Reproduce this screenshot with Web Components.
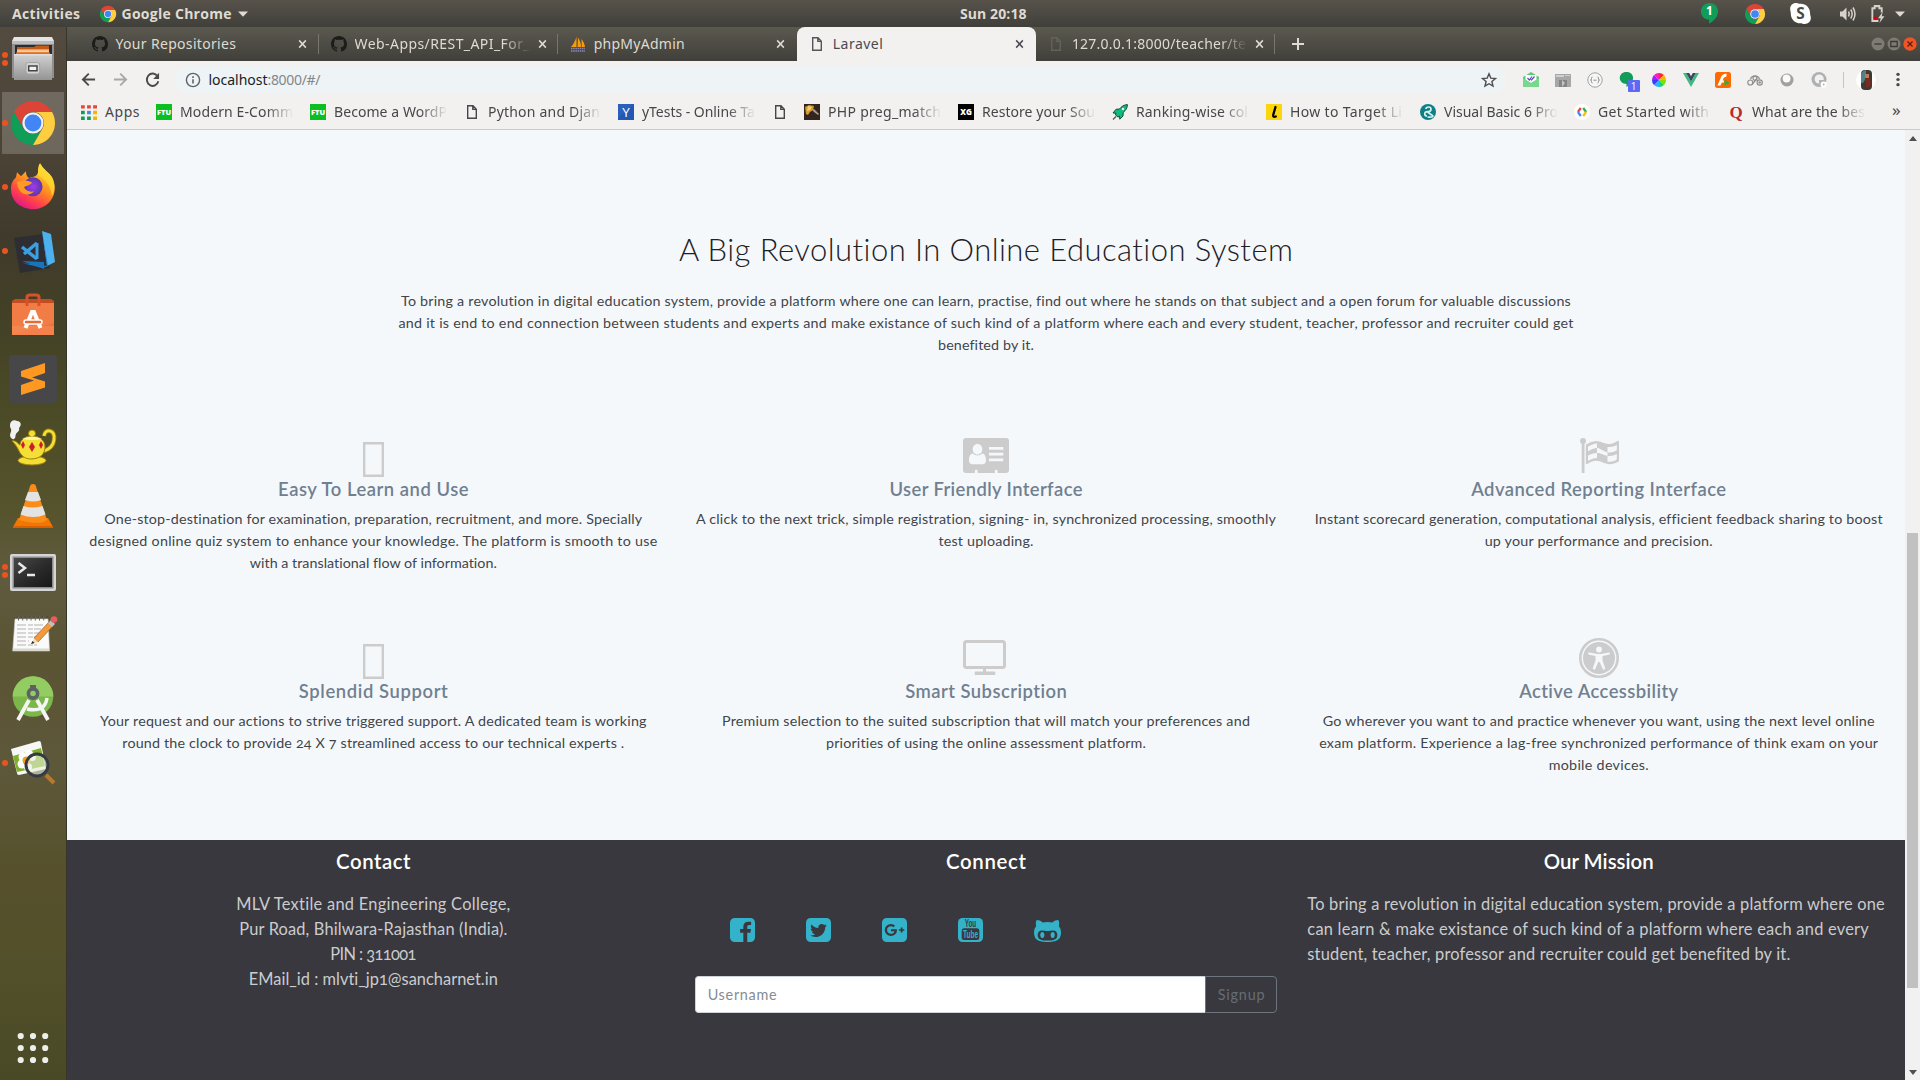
<!DOCTYPE html>
<html lang="en">
<head>
<meta charset="utf-8">
<title>Laravel</title>
<style>
html,body{margin:0;height:100%;overflow:hidden;background:#f5f8fb}
body{font-family:"Noto Sans","Open Sans",sans-serif}
</style>
</head>
<body>
<desktop-shell>
  <top-panel slot="panel"></top-panel>
  <app-dock slot="dock"></app-dock>
  <browser-window slot="window">
    <landing-page>
      <feature-card icon="tofu" heading="Easy To Learn and Use" w="190.5">
        <fit-text w="538">One-stop-destination for examination, preparation, recruitment, and more. Specially</fit-text>
        <fit-text w="568">designed online quiz system to enhance your knowledge. The platform is smooth to use</fit-text>
        <fit-text w="247">with a translational flow of information.</fit-text>
      </feature-card>
      <feature-card icon="card" heading="User Friendly Interface" w="193">
        <fit-text w="580">A click to the next trick, simple registration, signing- in, synchronized processing, smoothly</fit-text>
        <fit-text w="95">test uploading.</fit-text>
      </feature-card>
      <feature-card icon="flag" heading="Advanced Reporting Interface" w="255">
        <fit-text w="568">Instant scorecard generation, computational analysis, efficient feedback sharing to boost</fit-text>
        <fit-text w="228">up your performance and precision.</fit-text>
      </feature-card>
      <feature-card icon="tofu" heading="Splendid Support" w="149">
        <fit-text w="546.5">Your request and our actions to strive triggered support. A dedicated team is working</fit-text>
        <fit-text w="502">round the clock to provide 24 X 7 streamlined access to our technical experts .</fit-text>
      </feature-card>
      <feature-card icon="tv" heading="Smart Subscription" w="161.5">
        <fit-text w="528">Premium selection to the suited subscription that will match your preferences and</fit-text>
        <fit-text w="320">priorities of using the online assessment platform.</fit-text>
      </feature-card>
      <feature-card icon="access" heading="Active Accessbility" w="159">
        <fit-text w="552">Go wherever you want to and practice whenever you want, using the next level online</fit-text>
        <fit-text w="559">exam platform. Experience a lag-free synchronized performance of think exam on your</fit-text>
        <fit-text w="100">mobile devices.</fit-text>
      </feature-card>
    </landing-page>
  </browser-window>
</desktop-shell>

<script>
const chromeArt = '<path fill="#db4437" d="M4.95 13A22 22 0 0 1 43.05 13H24A11 11 0 0 0 14.47 29.5Z"/><path fill="#0f9d58" d="M4.95 13A22 22 0 0 0 24 46L33.53 29.5A11 11 0 0 1 14.47 29.5Z"/><path fill="#ffcd40" d="M24 46A22 22 0 0 0 43.05 13H24A11 11 0 0 1 33.53 29.5Z"/><circle cx="24" cy="24" r="10.6" fill="#f1f1f1"/><circle cx="24" cy="24" r="8.4" fill="#4285f4"/>';
const sq = 'M1664 416v960q0 119-84.5 203.5t-203.5 84.5h-960q-119 0-203.5-84.5t-84.5-203.5v-960q0-119 84.5-203.5t203.5-84.5h960q119 0 203.5 84.5t84.5 203.5z';
const ICONS = {
  chrome: ['0 0 48 48', chromeArt],
  github: ['0 0 16 16', '<path fill="#1c1c1a" d="M8 0C3.58 0 0 3.58 0 8c0 3.54 2.29 6.53 5.47 7.59.4.07.55-.17.55-.38 0-.19-.01-.82-.01-1.49-2.01.37-2.53-.49-2.69-.94-.09-.23-.48-.94-.82-1.13-.28-.15-.68-.52-.01-.53.63-.01 1.08.58 1.23.82.72 1.21 1.87.87 2.33.66.07-.52.28-.87.51-1.07-1.78-.2-3.64-.89-3.64-3.95 0-.87.31-1.59.82-2.15-.08-.2-.36-1.02.08-2.12 0 0 .67-.21 2.2.82.64-.18 1.32-.27 2-.27.68 0 1.36.09 2 .27 1.53-1.04 2.2-.82 2.2-.82.44 1.1.16 1.92.08 2.12.51.56.82 1.27.82 2.15 0 3.07-1.87 3.75-3.65 3.95.29.25.54.73.54 1.48 0 1.07-.01 1.93-.01 2.2 0 .21.15.46.55.38A8.013 8.013 0 0016 8c0-4.42-3.58-8-8-8z"/>'],
  pma: ['0 0 16 16', '<path fill="#f89c0e" d="M6.5.5C5.5 4 4 7.500 1 11h5.500zM8 1.500c2 3 3 6 3 9.500H7.500zM11.500 3c2 2.500 3 5 3.500 8h-3.300z"/><path d="M1 12.500h14M1 15h14" stroke="#8d8bb5" stroke-width="1.600" stroke-dasharray="1.500 .7"/>'],
  file: ['0 0 16 16', '<path fill="none" stroke="currentColor" stroke-width="1.400" d="M3.700 1.700H9l3.300 3.500v9.100H3.700zM8.800 1.700v3.700h3.500"/>'],
  close: ['0 0 10 10', '<path stroke="currentColor" stroke-width="1.700" d="M1.300 1.300l7.400 7.400M8.700 1.300L1.300 8.700"/>'],
  plus: ['0 0 14 14', '<path stroke="#dfdbd2" stroke-width="2" d="M7 1v12M1 7h12"/>'],
  down: ['0 0 10 6', '<path fill="#dfdbd2" d="M0 .5h10L5 5.800z"/>'],
  back: ['0 0 16 16', '<path fill="none" stroke="currentColor" stroke-width="2" d="M15 8H2.500M8.300 1.800L2 8l6.300 6.200"/>'],
  fwd: ['0 0 16 16', '<path fill="none" stroke="currentColor" stroke-width="2" d="M1 8h12.500M7.700 1.800L14 8l-6.300 6.200"/>'],
  reload: ['0 0 16 16', '<path fill="none" stroke="#4a4a4a" stroke-width="2" d="M13.300 4.200A6.200 6.200 0 1 0 14.200 9.200"/><path fill="#4a4a4a" d="M15 .8v6.200H8.800z"/>'],
  info: ['0 0 16 16', '<circle cx="8" cy="8" r="6.600" fill="none" stroke="#5f6368" stroke-width="1.400"/><path stroke="#5f6368" stroke-width="1.600" d="M8 7.200v4.300M8 4.300v1.700"/>'],
  star: ['0 0 16 16', '<path fill="none" stroke="#4e4e52" stroke-width="1.400" d="M8 1.800l1.800 4.300 4.700.4-3.600 3 1.100 4.600L8 11.700l-4 2.400 1.100-4.600-3.600-3 4.700-.4z"/>'],
  hang: ['0 0 20 24', '<path fill="#0f9d58" d="M10 1C4.500 1 1 5 1 9.800c0 4.600 3.600 8.400 8.500 8.500v4.200c5-2.500 9.500-7.500 9.500-12.700C19 5 15.500 1 10 1z"/><text x="10" y="14" text-anchor="middle" font-family="Open Sans" font-weight="700" font-size="12.500" fill="#fff">1</text>'],
  skype: ['0 0 24 24', '<path fill="#fff" d="M7 1c2 0 3 .8 5 .8 6 0 10 4.300 10 10 0 2 .8 3 .8 5 0 3.800-3 6.200-6.300 6.200-2 0-2.800-.8-4.600-.8-6 0-10-4.500-10-10C1.900 10 1.200 9 1.200 7 1.200 3.500 4 1 7 1z"/><text x="12" y="17.600" text-anchor="middle" font-family="Open Sans" font-weight="700" font-size="16" fill="#4a4944">S</text>'],
  volume: ['0 0 17 16', '<path fill="#d6d2c9" d="M1 5.500h2.500L7.500 1.500v13L3.500 10.500H1z"/><path fill="none" stroke="#d6d2c9" stroke-width="1.500" d="M9.500 5.500q1.500 2.500 0 5M11.700 3.500q3 4.500 0 9M14 1.500q4 6.500 0 13"/>'],
  battery: ['0 0 16 18', '<path fill="none" stroke="#d6d2c9" stroke-width="2" d="M9 16H2.500V4H5V2h5v2h2.500v4"/><path fill="#d6d2c9" d="M13.500 7.500l-5 6h3L10 18l5.500-6.500h-3z"/><path fill="#d00" d="M4 12h4v3H4z"/>'],
  min: ['0 0 14 14', '<circle cx="7" cy="7" r="6.500" fill="#7e7b72"/><path stroke="#3a3934" stroke-width="1.300" d="M3.500 7h7"/>'],
  max: ['0 0 14 14', '<circle cx="7" cy="7" r="6.500" fill="#7e7b72"/><path fill="none" stroke="#3a3934" stroke-width="1.300" d="M3.800 4.500h6.400v5H3.800z"/>'],
  quit: ['0 0 14 14', '<circle cx="7" cy="7" r="6.700" fill="#ef5326"/><path stroke="#5a2010" stroke-width="1.300" d="M4.500 4.500l5 5M9.500 4.500l-5 5"/>'],
  apps: ['0 0 14 14', '<g><path fill="#e8453c" d="M0 1h3.300v3H0zM5.300 1h3.300v3H5.300zM10.600 1H14v3h-3.400z"/><path fill="#0f9d58" d="M0 6h3.300v3H0zM0 11h3.300v3H0zM5.300 11h3.300v3H5.300z"/><path fill="#4285f4" d="M5.300 6h3.300v3H5.300z"/><path fill="#f4b400" d="M10.600 6H14v3h-3.400zM10.600 11H14v3h-3.400z"/></g>'],
  ftu: ['0 0 16 16', '<path fill="#0bbf22" d="M0 0h16v16H0z"/><text x="8" y="11" text-anchor="middle" font-family="Open Sans" font-weight="800" font-size="7.500" textLength="14" lengthAdjust="spacingAndGlyphs" fill="#fff">FTU</text>'],
  y: ['0 0 16 16', '<path fill="#2257b4" d="M0 0h16v16H0z"/><path fill="#3568c4" d="M0 0h16L0 14z" opacity=".5"/><text x="8" y="13" text-anchor="middle" font-family="Open Sans" font-size="13.500" fill="#fff">Y</text>'],
  photo: ['0 0 16 16', '<path fill="#33241d" d="M0 0h16v16H0z"/><path fill="#d59a2c" d="M1 3l4-2 5 1-1 4-3 2-2 3-2-1z"/><path fill="#f3cf6a" d="M4 2l4 1-2 3-3 1z"/><path fill="#a99c8c" d="M8 6l2-1 5 5-1 1-4-3z"/>'],
  xg: ['0 0 16 16', '<path fill="#000" d="M0 0h16v16H0z"/><text x="8" y="11" text-anchor="middle" font-family="Open Sans" font-weight="800" font-size="8" fill="#fff">XG</text>'],
  rocket: ['0 0 16 16', '<path fill="#12b981" stroke="#17493c" stroke-width="1" d="M15.400.6C12 .8 9.500 2.500 7.500 5L4 5.300 1 9l3 .2L3.500 11 6 13l1.500-.8.300 3L11 12l.2-3.500C14 6 15.400 4 15.400.6z"/><circle cx="11" cy="5" r="1.200" fill="#e8fff8"/><path stroke="#555" stroke-width="1.300" d="M1 15.500l3-3"/>'],
  l: ['0 0 16 16', '<path fill="#fcd60a" d="M0 0h16v16H0z"/><path fill="none" stroke="#000" stroke-width="2.300" stroke-linecap="round" d="M9.500 3L7.300 10.500q-.8 3 2.500 2"/>'],
  vb: ['0 0 16 16', '<circle cx="8" cy="8" r="8" fill="#0f7f86"/><path fill="none" stroke="#d8f3ef" stroke-width="1.700" d="M6 5q0-2 2.500-2T11 5.200 8.500 7.500 11 10.500 7.500 13M9.800 8Q5 7 4.800 9.500T7 12"/>'],
  dev: ['0 0 16 16', '<circle cx="8" cy="8" r="8" fill="#fff"/><g fill="none" stroke-width="2.200"><path stroke="#ea4335" d="M6.800 4L3.900 8"/><path stroke="#4285f4" d="M3.900 8l2.900 4"/><path stroke="#34a853" d="M9.200 4l2.900 4"/><path stroke="#fbbc05" d="M12.100 8l-2.900 4"/></g>'],
  q: ['0 0 16 16', '<text x="8" y="13.500" text-anchor="middle" font-family="Liberation Serif" font-weight="700" font-size="17" fill="#b92b27">Q</text>'],
  mail: ['0 0 16 16', '<path fill="#5cc878" d="M0 5l8-5 8 5v9q0 1-1 1H1q-1 0-1-1z"/><path fill="#fff" d="M2.500 3h11v5L8 11 2.500 8z"/><path fill="#79d88d" d="M0 6l8 5 8-5v8q0 1-1 1H1q-1 0-1-1z"/><path fill="none" stroke="#5b4ec2" stroke-width="1.200" d="M4.500 6l1.800 2L9 4.500M7.500 7.500l1 .5 3-3.500"/>'],
  shots: ['0 0 16 16', '<path fill="#a7a7a7" d="M0 2h16v13H0z"/><path fill="#d0d0d0" d="M1 3h8v2H1zM10 3h5v1h-5z"/><path fill="#858585" d="M4 8h8v7H4z"/><path fill="#c4c4c4" d="M7 8l3 3-3 4z"/>'],
  json: ['0 0 16 16', '<circle cx="8" cy="8" r="7.200" fill="#f6f6f6" stroke="#a2a2a2"/><path fill="none" stroke="#8a8a8a" d="M5.500 5q-1.200 0-1 1.500T3.500 8q1.200.2 1 1.500t1 1.500M10.500 5q1.200 0 1 1.500t1 1.500q-1.200.2-1 1.500t-1 1.500M6.500 8.200h3"/>'],
  wheel: ['0 0 16 16', '<path fill="#ff2b2b" d="M8 8V1h0a7 7 0 0 1 5 2z"/><path fill="#f9b600" d="M8 8l5-5a7 7 0 0 1 2 5z"/><path fill="#7ee000" d="M8 8h7a7 7 0 0 1-2 5z"/><path fill="#1bd26a" d="M8 8l5 5a7 7 0 0 1-5 2z"/><path fill="#22b8ff" d="M8 8v7a7 7 0 0 1-5-2z"/><path fill="#3a3aff" d="M8 8l-5 5a7 7 0 0 1-2-5z"/><path fill="#a41bff" d="M8 8H1a7 7 0 0 1 2-5z"/><path fill="#ff1bb5" d="M8 8L3 3a7 7 0 0 1 5-2z"/>'],
  vue: ['0 0 16 16', '<path fill="#41b883" d="M0 1h3.200L8 9.500 12.800 1H16L8 15z"/><path fill="#35495e" d="M3.200 1h3L8 4.200 9.800 1h3L8 9.500z"/>'],
  flash: ['0 0 16 16', '<rect width="16" height="16" rx="2.500" fill="#ff6a00"/><path fill="#fff" d="M11.500 1.500q-5 .5-6 5L2.500 13.500h3l1.300-3H9V8.500H7.600q.8-3.500 3.900-4z"/><path fill="#2fae45" d="M9.500 7.500l5 3.200-5 3.300z"/>'],
  cubes: ['0 0 16 16', '<g fill="none" stroke="#8e8e8e" stroke-width="1.200"><path d="M3.500 7a4.800 4.800 0 0 1 9 0M5 12.500l5-6"/><circle cx="3.300" cy="10.500" r="2.500"/><circle cx="12.700" cy="10.500" r="2.600"/><circle cx="8" cy="6.300" r="2"/></g><circle cx="12.700" cy="10.500" r="1.200" fill="#8e8e8e"/>'],
  orb: ['0 0 16 16', '<circle cx="8" cy="8" r="6.500" fill="#a0a0a0"/><circle cx="7.600" cy="6.500" r="3.900" fill="#fafafa"/>'],
  orb2: ['0 0 16 16', '<circle cx="8" cy="7.500" r="7.500" fill="#b0b0b0"/><circle cx="8.200" cy="7" r="4.600" fill="#f1f1f1"/><path fill="#b4b4b4" d="M8 8h5v5H8z"/><circle cx="12.700" cy="12.500" r="3.100" fill="#fff"/><circle cx="12.700" cy="12.500" r=".9" fill="#b0b0b0"/>'],
  bubble: ['0 0 16 18', '<path fill="#0f9d58" d="M8 0C3.500 0 .8 3 .8 6.800S4 13.500 8 13.500V17q7-4 7-10.200C15 3 12.500 0 8 0z"/>'],
  avatar: ['0 0 20 20', '<circle cx="10" cy="10" r="10" fill="#fdfdfd"/><rect x="5" width="11" height="20" rx="4" fill="#3b3a33"/><path fill="#4f8187" d="M5 3q3-3 5-3v8l-3 5H5z"/><path fill="#c07a52" d="M9 4h4v4H9z"/><path fill="#7a2a20" d="M9 8h5l1 8-5 2z"/>'],
  kebab: ['0 0 4 16', '<circle cx="2" cy="2.500" r="1.700" fill="#4a4a4a"/><circle cx="2" cy="8" r="1.700" fill="#4a4a4a"/><circle cx="2" cy="13.500" r="1.700" fill="#4a4a4a"/>'],
  /* page icons */
  card: ['0 0 46 35', '<path fill="#ccc" fill-rule="evenodd" d="M3 0h40q3 0 3 3v29q0 3-3 3h-8.500v-2.500q0-.7-.8-.7h-1q-.8 0-.8.7V35H14.500v-2.500q0-.7-.8-.7h-1q-.8 0-.8.7V35H3q-3 0-3-3V3q0-3 3-3zM14.500 6c-3 0-4.800 2.400-4.800 5.200s1.900 5.300 4.800 5.300 4.800-2.500 4.800-5.300S17.500 6 14.500 6zM9.800 15.600C6.800 16 6 19.300 6 22.500c0 2.200 1.300 3.700 3.400 3.700h10.200c2.100 0 3.400-1.500 3.400-3.700 0-3.200-.8-6.500-3.800-6.900-1.300 1.300-2.900 2-4.700 2s-3.400-.7-4.700-2zM26 9v2.800h14.300V9zm0 5.700v2.800h14.300v-2.800zm0 5.800v2.800h14.300v-2.800z"/>'],
  flag: ['0 0 40 35', '<g fill="#ccc"><circle cx="3" cy="3" r="3"/><path d="M1.700 3h2.800v32H1.700z"/><path fill-rule="evenodd" d="M6 6.500Q11 3 16 3c5 0 8 3 13 3 3.500 0 6-1.500 8.500-3 .8-.4 1.500 0 1.500 1v18.500q0 .8-.7 1.200C35.500 25 33 26.200 29.500 26.200 24.500 26.200 21 22.800 16.500 22.800c-3.500 0-6.500 1.500-9.300 3.200-.6.400-1.400 0-1.400-.8V7.500q0-.6.200-1zM17 5.500c-3 0-6 1.300-9 3.200v4.600c3-2 6-3.200 9-3.300zM27.500 9v5.200c3 .5 6 0 9.300-2V7c-3 1.700-6 2.300-9.300 2zM17 10v5c4 0 7 2.300 10.500 2.800v-3.600C24 14 21 10.500 17 10zM8 17.500v5.200c3-1.500 6-2.600 9-2.700V15c-3 0-6 .9-9 2.500zM27.500 17.800v5.800c3 .5 6.200 0 9.300-2v-5.500c-3 1.700-6 2.200-9.300 1.700z"/></g>'],
  tv: ['0 0 43 35', '<path fill="none" stroke="#ccc" stroke-width="3" d="M3.500 1.500h36q2 0 2 2v22q0 2-2 2h-36q-2 0-2-2v-22q0-2 2-2z"/><path fill="#ccc" d="M20 28h3v3.500h8.500q.8 0 .8.800v1.900q0 .8-.8.800h-19q-.8 0-.8-.8v-1.900q0-.8.8-.8H20z"/>'],
  access: ['0 0 40 40', '<circle cx="20" cy="20" r="18.700" fill="none" stroke="#ccc" stroke-width="2.600"/><circle cx="20" cy="20" r="16" fill="#ccc"/><circle cx="20" cy="11.500" r="2.900" fill="#f5f8fb"/><path fill="#f5f8fb" d="M10 14.500q-1.200-.2-.9 1.100.2.900 1.200 1.100l6.200 1.300v4.500l-2.600 7.500q-.3 1.200.7 1.600 1.200.3 1.700-.8L19.300 24h1.400l3 6.800q.6 1.100 1.700.8 1-.4.700-1.600l-2.600-7.500V18l6.200-1.300q1-.2 1.200-1.100.2-1.300-.9-1.100l-8 1.400h-4z"/>'],
  tofu: ['0 0 21 35', '<path fill="none" stroke="#ccc" stroke-width="2.400" d="M1.200 1.200h18.600v32.600H1.200z"/>'],
  fb: ['128 128 1536 1536', '<path fill="#33b2ca" d="M1376 128q119 0 203.500 84.500t84.500 203.500v960q0 119-84.500 203.500t-203.500 84.500h-188v-595h199l30-232h-229v-148q0-56 23.500-84t91.500-28l122-1v-207q-63-9-178-9-136 0-217.500 80t-81.500 226v171h-200v232h200v595h-532q-119 0-203.500-84.500t-84.500-203.500v-960q0-119 84.500-203.500t203.500-84.500h960z"/>'],
  tw: ['128 128 1536 1536', '<path fill="#33b2ca" fill-rule="evenodd" d="M1408 610q-56 25-121 34 68-40 93-117-65 38-134 51-61-66-153-66-87 0-148.500 61.500t-61.500 148.500q0 29 5 48-129-7-242-65t-192-155q-29 50-29 106 0 114 91 175-47-1-100-26v2q0 75 50 133.500t123 72.500q-29 8-51 8-13 0-39-4 21 63 74.500 104t121.500 42q-116 90-261 90-26 0-50-3 148 94 322 94 112 0 210-35.500t168-95 120.500-137 75-162 24.500-168.500q0-18-1-27 63-45 105-109z'+sq+'"/>'],
  gp: ['128 128 1536 1536', '<path fill="#33b2ca" fill-rule="evenodd" d="M1045 905q0-26-6-64h-362v132h217q-3 24-16.500 50t-37.500 53-66.500 44.500-96.500 17.500q-99 0-169-71t-70-171 70-171 169-71q92 0 153 59l104-101q-108-100-257-100-160 0-272 112.500t-112 271.500 112 271.500 272 112.500q165 0 266.500-105t101.500-270zm345 46h109v-110h-109v-110h-110v110h-110v110h110v110h110v-110z'+sq+'"/>'],
  yt: ['0 0 25 24', '<rect width="25" height="24" rx="4.500" fill="#33b2ca"/><rect x="3.700" y="10.300" width="17.600" height="11.700" rx="2.500" fill="#38383e"/><text x="12.500" y="8.800" text-anchor="middle" font-family="Liberation Sans" font-weight="700" font-size="10" textLength="11.500" lengthAdjust="spacingAndGlyphs" fill="#38383e">You</text><text x="12.500" y="20.200" text-anchor="middle" font-family="Liberation Sans" font-weight="700" font-size="11" textLength="15" lengthAdjust="spacingAndGlyphs" fill="#33b2ca">Tube</text>'],
  gh: ['64 256 1664 1408', '<path fill="#33b2ca" d="M704 1216q0 40-12.500 82t-43 76-72.500 34-72.500-34-43-76-12.500-82 12.500-82 43-76 72.500-34 72.500 34 43 76 12.500 82zm640 0q0 40-12.500 82t-43 76-72.500 34-72.500-34-43-76-12.500-82 12.500-82 43-76 72.500-34 72.500 34 43 76 12.500 82zm160 0q0-120-69-204t-187-84q-41 0-195 21-71 11-157 11t-157-11q-152-21-195-21-118 0-187 84t-69 204q0 88 32 153.500t81 103 122 60 140 29.500 149 7h168q82 0 149-7t140-29.500 122-60 81-103 32-153.500zm224-176q0 207-61 331-38 77-105.500 133t-141 86-170 47.500-171.500 22-167 4.500q-78 0-142-3t-147.500-12.500-152.500-30-137-51.500-121-81-86-115q-62-123-62-331 0-237 136-396-27-82-27-170 0-116 51-218 108 0 190 39.500t189 123.500q147-35 309-35 148 0 280 32 105-82 187-121t189-39q51 102 51 218 0 87-27 168 136 160 136 398z"/>'],
  /* dock icons */
  dFiles: ['0 0 48 48', '<defs><linearGradient id="a" x2="0" y2="1"><stop stop-color="#d2d2d2"/><stop offset="1" stop-color="#949494"/></linearGradient></defs><path fill="#8f8f8f" d="M3 6h42v37H3z"/><path fill="#e4e4e4" d="M5 2h38l2 4H3z"/><path fill="#bdbdbd" d="M3 6h42v3H3z"/><path fill="#2c2c2c" d="M6 10h37v10H6z"/><path fill="#c25a18" d="M8 12h17l2-1.500h13V20H8z"/><path fill="#f2984d" d="M8 14h32v6H8z"/><path fill="#fbe3cc" d="M8 15.500h32v1.200H8z"/><path fill="#dd6d22" d="M7 17.500h34V20H7z"/><path fill="url(#a)" d="M5 19h38v26H5z"/><path fill="#dedede" d="M5 19h38v1.500H5z"/><rect x="17" y="27.500" width="13.700" height="11.500" rx="2.500" fill="#d4d4d4" stroke="#a3a3a3"/><path fill="#f2f2f2" stroke="#444" stroke-width="1.500" d="M19.700 31h8.300v4.800h-8.300z"/>'],
  dFox: ['0 1.7 48 48', '<defs><linearGradient id="b" x1=".8" y1=".1" x2=".3" y2="1"><stop stop-color="#ffe53b"/><stop offset=".45" stop-color="#ff8a1f"/><stop offset=".75" stop-color="#ff3f4e"/><stop offset="1" stop-color="#e31587"/></linearGradient><radialGradient id="c"><stop stop-color="#a13bf0"/><stop offset="1" stop-color="#5b38a8"/></radialGradient></defs><path fill="url(#b)" d="M31 2c3 6 9 9 12 14 8 15-2 31-18 32C11 48 2 39 2 28c0-6 2-9 5-12l1-5 4 4 5-5c0 4 1 5 3 7 4-2 8-1 9-6 0-4 0-6 2-9z"/><circle cx="24" cy="25.500" r="9.500" fill="url(#c)"/><path fill="#ff9a22" d="M8 21c5-3 11-2 15 0-1 3-5 3-8 5 2 4 6 5 10 4-4 5-12 4-15-2-1-2-2-4-2-7z"/><path fill="#ffd92e" opacity=".8" d="M31 2c3 6 9 9 12 14 4 9 2 14 0 19-1-9-4-15-14-21 0-5 1-9 2-12z"/>'],
  dCode: ['0 0 48 48', '<path fill="#2d2d33" d="M5 11l29-4 7 34-30 5z"/><path fill="none" stroke="#3b9fe0" stroke-width="3.500" d="M28 16L15 27M13 20l15 12"/><path fill="none" stroke="#3b9fe0" stroke-width="3" d="M28 16v16"/><path fill="#4db1ee" d="M33 4l9 3 4 28-8 4z"/><path fill="#1b7fc6" d="M33 4l5 35-25-3 21 5 5-2z"/><path fill="#1676bd" d="M13 34l22 1v7z"/>'],
  dBag: ['0 0 48 48', '<path fill="#c24d20" d="M3 10l3-2h36l3 2v6H3z"/><path fill="#f17c45" d="M3 12h42v32H3z"/><path fill="#e96a33" d="M45 12v20L3 44h42z" opacity=".5"/><path fill="#fb8f5c" d="M3 35h42v9H3z" opacity=".5"/><path fill="none" stroke="#d6532a" stroke-width="3" d="M18 15V6q0-2 3-2h6q3 0 3 2v9"/><path fill="none" stroke="#fff" stroke-width="4" d="M16.500 37L23 21h2l6.500 16"/><rect x="15" y="29" width="18" height="4" rx="2" fill="#e96a33" stroke="#fff" stroke-width="1.500"/>'],
  dSub: ['0 0 48 48', '<rect width="48" height="48" rx="4" fill="#47474a"/><path fill="#ff9820" d="M12 16l24-8v10l-13 4.500 13 4v6l-24 7.500V30l13-4.500-13-4z"/>'],
  dLamp: ['0 0 48 48', '<path fill="#f1f1f1" d="M1 6c0-4 4-6 7-4 4 0 5 4 2 7 1 3-2 4-3 6s0 4-2 5-4-2-4-4 2-4 1-6-1-2-1-4z"/><g stroke="#9c7f0c"><path fill="none" stroke="#9c7f0c" stroke-width="4.500" d="M35 17q1-6 6-5 5 1 4 9-1 8-10 11"/><path fill="none" stroke="#f3df35" stroke-width="2.800" d="M35 17q1-6 6-5 5 1 4 9-1 8-10 11"/><ellipse cx="23" cy="41.500" rx="14" ry="4.500" fill="#f3df35"/><path fill="#f3df35" d="M3 22c4-1 5 2 8 4 0-5 5-9 12-9s13 4 13 11c0 7-5 12-14 12-7 0-10-4-12-8S7 26 3 22z"/><circle cx="23" cy="14.500" r="3.500" fill="#f3df35"/></g><path fill="#fff7a0" d="M13 20q10-5 20 0-10 2-20 0z"/><path fill="#cf1b2b" d="M14 22l2 4-2 4-2-4zM23 23l3 5-3 5-3-5zM32 22l2 4-2 4-2-4z"/>'],
  dVlc: ['0 0 48 48', '<path fill="#f07800" d="M9 35h30l5 9q0 1-1 1H5q-1 0-1-1z"/><path fill="#d95f00" d="M4 43h40v2H4z"/><path fill="#fb8c1a" d="M21.500 2q2.500-2 5 0L38 37q-7 6-28 0z"/><path fill="#e3e3e3" d="M19 9h10l3 8q-8 3-16 0zM14.500 23q9 3 19 0l3 8.500q-12 5-25 0z"/>'],
  dTerm: ['0 0 48 48', '<defs><linearGradient id="t" x2="1" y2="1"><stop stop-color="#484848"/><stop offset=".5" stop-color="#2c2c2c"/><stop offset="1" stop-color="#171717"/></linearGradient></defs><rect x="1" y="7" width="46" height="37" rx="2" fill="#d5d5d5"/><path fill="#8b8b8b" d="M3.500 9.500h41v32h-41z"/><path fill="url(#t)" d="M5 11h38v29H5z"/><path fill="none" stroke="#e9e9e9" stroke-width="2.500" d="M9.500 16l6.500 5-6.500 5M18 28h8"/>'],
  dNote: ['0 1 48 48', '<path fill="#fafafa" stroke="#cfcfcf" stroke-width=".6" d="M6 9h33l1.500 32H3.700z"/><path fill="#d9d9d0" d="M4 38.500h36v2.500H4z"/><path stroke="#4a4a4a" stroke-width="1.800" stroke-dasharray="2 2.200" d="M8 7h31"/><path stroke="#666" stroke-width="5" stroke-dasharray="1 3.200" d="M9 8h29"/><path stroke="#b3b3b3" stroke-width="1" stroke-dasharray="9 2 5 1" d="M8 15h28M8 19h24M8 23h27M8 27h20M8 31h12M8 35h20"/><path fill="#f4993b" stroke="#9a5c1c" stroke-width=".7" d="M25 28L40 12l4 4-15 16z"/><path fill="#f5dcae" d="M25 28l4 4-6.500 2.500z"/><path fill="#222" d="M23.500 31l2 2-3.500 1z"/><path fill="#b9c3cc" d="M39 13l3-3 4 4-3 3z"/><circle cx="45" cy="9.500" r="3.300" fill="#ea5a5f"/>'],
  dStudio: ['0 0 48 48', '<circle cx="24" cy="21.500" r="20.300" fill="#7bb84a"/><path fill="#93cc60" d="M3.700 21.500a20.300 20.300 0 0 1 40.600 0z"/><g stroke="#f5f5f5" stroke-width="3.800" fill="none"><path d="M20 25L9 45M28 25l11 20"/><path stroke-width="3.500" d="M18 34Q36 38 38 23"/></g><circle cx="24" cy="18.500" r="4.600" fill="none" stroke="#5c6266" stroke-width="3.600"/><path fill="#5c6266" d="M21 10h6v5h-6z"/>'],
  dView: ['0 0 48 48', '<path fill="#f7f7f7" d="M2 10l28-8q2 0 2 2l5 26-27 6q-2 0-2-2z"/><path fill="#7fb02c" d="M4 17l28-8 4 18-28 6z"/><g fill="#fff"><circle cx="14" cy="18" r="4.500"/><circle cx="20" cy="15" r="4"/><circle cx="13" cy="25" r="4.500"/><circle cx="23" cy="18" r="4"/><circle cx="19" cy="28" r="4"/></g><circle cx="17.500" cy="21.500" r="4" fill="#f0a01c"/><path stroke="#b8792d" stroke-width="4" d="M37 36l8 8"/><circle cx="28" cy="26" r="11" fill="#e8eeda" fill-opacity=".6" stroke="#343b42" stroke-width="3"/>'],
  dGrid: ['0 0 48 48', '<g fill="#eeeeec"><circle cx="11.700" cy="12" r="3.100"/><circle cx="24" cy="12" r="3.100"/><circle cx="36.200" cy="12" r="3.100"/><circle cx="11.700" cy="24" r="3.100"/><circle cx="24" cy="24" r="3.100"/><circle cx="36.200" cy="24" r="3.100"/><circle cx="11.700" cy="36" r="3.100"/><circle cx="24" cy="36" r="3.100"/><circle cx="36.200" cy="36" r="3.100"/></g>']
};
class Base extends HTMLElement {
  connectedCallback(){
    if(this.shadowRoot) return;
    const t=document.createElement('template');
    t.innerHTML=this.view();
    this.attachShadow({mode:'open'}).append(document.importNode(t.content,true));
  }
  at(n,d=''){return this.getAttribute(n)??d}
}
const ic=(n,w,h=w,extra='')=>`<ui-icon name="${n}" w="${w}" h="${h}" ${extra}></ui-icon>`;

customElements.define('ui-icon', class extends Base {
  view(){
    const [vb,art]=ICONS[this.at('name')];
    return `<style>:host{display:block;flex:none;width:${this.at('w')}px;height:${this.at('h')}px}svg{display:block;overflow:visible}</style>
    <svg width="${this.at('w')}" height="${this.at('h')}" viewBox="${vb}" preserveAspectRatio="none">${art}</svg>`;
  }
});

customElements.define('desktop-shell', class extends Base {
  view(){return `<style>
    :host{display:grid;width:1920px;height:1080px;grid-template:27px 1fr / 67px 1fr;overflow:hidden}
    slot[name=panel]::slotted(*){grid-column:1/3}
    </style><slot name="panel"></slot><slot name="dock"></slot><slot name="window"></slot>`}
});

customElements.define('top-panel', class extends Base {
  view(){return `<style>
    :host{display:flex;align-items:center;height:27px;box-sizing:border-box;padding:0 15px 0 12px;
      background:linear-gradient(#57534b,#403f3a);color:#dfdbd2;font:700 14px/26px "Open Sans",sans-serif}
    .g{display:flex;align-items:center;width:948px}
    .e{justify-content:flex-end;flex:1}
    </style>
    <div class="g"><fit-text w="68">Activities</fit-text>${ic('chrome',18,18,'style="margin:0 5px 0 18.5px"')}<fit-text w="110">Google Chrome</fit-text>${ic('down',10,6,'style="margin-left:6px"')}</div>
    <fit-text w="66.5">Sun 20:18</fit-text>
    <div class="g e">${ic('hang',19,23)}${ic('chrome',22,22,'style="margin-left:25px"')}${ic('skype',23,23,'style="margin-left:23px"')}${ic('volume',17,16,'style="margin-left:27px"')}${ic('battery',15,19,'style="margin-left:14px"')}${ic('down',10,6,'style="margin-left:10px"')}</div>`}
});

customElements.define('dock-item', class extends Base {
  view(){
    const n=+this.at('dots','0');
    return `<style>
    :host{display:flex;align-items:center;height:64px;width:67px}
    .d{width:9px;display:flex;flex-direction:column;align-items:center;gap:2.500px}
    i{width:6px;height:6px;border-radius:50%;background:#e95420}
    :host([active]){background:linear-gradient(#ffffff30,#ffffff30) 2px 1px/62px 62px no-repeat}
    </style><div class="d">${'<i></i>'.repeat(n)}</div>${ic(this.at('icon'),48)}`}
});
customElements.define('app-dock', class extends Base {
  view(){
    const items=[['dFiles',2],['chrome',1,'active'],['dFox',1],['dCode',1],['dBag',0],['dSub',0],['dLamp',0],['dVlc',0],['dTerm',2],['dNote',0],['dStudio',0],['dView',1]];
    return `<style>
    :host{display:flex;flex-direction:column;box-sizing:border-box;border-right:1px solid #38352a;
      background:linear-gradient(180deg,#544b40 0,#4b4336 12%,#3f3a2b 20%,#444226 29%,#4d4c27 38%,#56542d 46%,#605b3f 52%,#5a5433 60%,#5e583b 70%,#56512c 80%,#52502a 90%,#494926 100%)}
    .s{flex:1}
    </style>${items.map(i=>`<dock-item icon="${i[0]}" dots="${i[1]}" ${i[2]||''}></dock-item>`).join('')}<div class="s"></div><dock-item icon="dGrid"></dock-item>`}
});

customElements.define('browser-tab', class extends Base {
  view(){return `<style>
    :host{display:flex;align-items:center;flex:none;box-sizing:border-box;width:239.100px;height:34px;padding-left:12px;color:#dfdbd2;font-size:14px;line-height:22px}
    .t{width:177.500px;margin-left:7.500px;padding-bottom:1px;white-space:nowrap}
    :host([fade]) .t{width:176px;margin-right:2px;-webkit-mask:linear-gradient(90deg,#000 84%,transparent)}
    .b{flex:1}
    .v{width:1px;height:20px;background:#77756c}
    :host([active]){background:#f2f1f0;color:#4a4a4f;border-radius:8px 8px 0 0}
    :host([active]) .v,:host([nosep]) .v{visibility:hidden}
    </style>${ic(this.at('icon'),16,16,`style="${this.at('tint')}"`)}<div class="t"><slot></slot></div>${ic('close',9,10,'style="margin-left:5px"')}<div class="b"></div><div class="v"></div>`}
});
customElements.define('book-mark', class extends Base {
  view(){return `<style>
    :host{display:flex;align-items:center;flex:none;width:154px;color:#47474b;font-size:14px;line-height:24px}
    .t{width:116px;margin-left:8px;padding-bottom:1px;white-space:nowrap;-webkit-mask:linear-gradient(90deg,#000 74%,transparent 98%)}
    :host([short]){width:75px}:host([short]) .t{-webkit-mask:none;width:50px}
    :host([bare]){width:32px}:host([bare]) .t{display:none}
    </style>${ic(this.at('icon'),16)}<div class="t"><slot></slot></div>`}
});
customElements.define('chrome-toolbar', class extends Base {
  view(){return `<style>
    :host{display:flex;align-items:center;height:37px;padding-left:14px;box-sizing:border-box;background:#f2f1f0;color:#4a4a4a;font-size:14px}
    .o{display:flex;align-items:center;box-sizing:border-box;width:1331px;height:28px;margin-left:14.500px;padding:0 9px 0 10px;border-radius:14px;background:#eef3f6}
    .u{margin-left:8px;display:flex;flex:1;color:#202124}
    .u span{color:#84878b}
    .x{display:flex;align-items:center;gap:16px;margin-left:17px}
    .h{position:relative}
    .bd{position:absolute;left:9px;top:8px;width:12px;height:12px;background:#5b6af5;color:#fff;font:10px/12px "Open Sans";text-align:center;border-radius:1px}
    .v{width:1px;height:16px;background:#c4c4c4}
    </style>
    ${ic('back',15)}${ic('fwd',15,15,'style="margin-left:17px;color:#a8a8a8"')}${ic('reload',15,16,'style="margin-left:17px"')}
    <div class="o">${ic('info',16)}<div class="u"><fit-text w="59">localhost</fit-text><span><fit-text w="53">:8000/#/</fit-text></span></div>${ic('star',16)}</div>
    <div class="x">${ic('mail',16)}${ic('shots',16)}${ic('json',16)}<div class="h">${ic('bubble',15,16,'style="margin-right:1px"')}<div class="bd">1</div></div>${ic('wheel',16)}${ic('vue',16)}${ic('flash',16)}${ic('cubes',16)}${ic('orb',16)}${ic('orb2',16)}<div class="v"></div>${ic('avatar',20,20,'style="margin-left:-4px"')}${ic('kebab',4,15,'style="margin-left:4px"')}</div>`}
});
customElements.define('scroll-bar', class extends Base {
  view(){return `<style>
    :host{display:flex;flex-direction:column;align-items:center;width:15px;background:#f1f1f1;box-sizing:border-box;padding:6px 0 5px}
    .u,.d{border:4.500px solid transparent;width:0;height:0;border-top:0;border-bottom:5px solid #505050}
    .d{border-bottom:0;border-top:5px solid #505050}
    .t{width:11px;height:455px;margin-top:392px;background:#c1c1c1}
    .f{flex:1}
    </style><div class="u"></div><div class="t"></div><div class="f"></div><div class="d"></div>`}
});
customElements.define('browser-window', class extends Base {
  view(){
    const bm=[['ftu','Modern E-Comm',113],['ftu','Become a WordP',113],['file','Python and Djan',112],['y','yTests - Online Ta',113],['file','',0,'bare'],['photo','PHP preg_match',113],['xg','Restore your Sou',113],['rocket','Ranking-wise col',112],['l','How to Target Li',112],['vb','Visual Basic 6 Pro',114],['dev','Get Started with',111],['q','What are the bes',113]];
    return `<style>
    :host{display:flex;flex-direction:column;min-width:0;font-family:"Noto Sans","Open Sans",sans-serif}
    .tabs{display:flex;align-items:center;height:34px;box-sizing:border-box;padding:0 3px 0 13px;background:linear-gradient(#5b594f,#403f3a)}
    .w{display:flex;gap:2px;margin-left:auto}
    .bm{display:flex;align-items:center;border-bottom:1px solid #cbcaca;background:#f2f1f0;padding:0 0 3px 14px;box-sizing:border-box;height:32px}
    .m{font-size:17px;line-height:20px;color:#47474b;margin:-4px 0 0 10px}
    .pg{display:flex;flex:1;min-height:0}
    .pg>slot::slotted(*){flex:1}
    </style>
    <div class="tabs">
      <browser-tab icon="github"><fit-text w="120.5">Your Repositories</fit-text></browser-tab>
      <browser-tab icon="github" fade><fit-text w="175">Web-Apps/REST_API_For_</fit-text></browser-tab>
      <browser-tab icon="pma" nosep><fit-text w="91">phpMyAdmin</fit-text></browser-tab>
      <browser-tab icon="file" active tint="color:#55555a"><fit-text w="50">Laravel</fit-text></browser-tab>
      <browser-tab icon="file" fade tint="color:#62625c"><fit-text w="174">127.0.0.1:8000/teacher/te</fit-text></browser-tab>
      ${ic('plus',14,14,'style="margin-left:15.5px"')}
      <div class="w">${ic('min',14)}${ic('max',14)}${ic('quit',14)}</div>
    </div>
    <chrome-toolbar></chrome-toolbar>
    <div class="bm"><book-mark icon="apps" short><fit-text w="34.5">Apps</fit-text></book-mark>${bm.map(b=>`<book-mark icon="${b[0]}" ${b[3]||''}>${b[1]?`<fit-text w="${b[2]}">${b[1]}</fit-text>`:''}</book-mark>`).join('')}<span class="m">»</span></div>
    <div class="pg"><slot></slot><scroll-bar></scroll-bar></div>`}
});

customElements.define('feature-card', class extends Base {
  view(){
    const s={tofu:[21,35,4,0],card:[46,35,0,0],flag:[40,35,0,2],tv:[43,35,0,-3],access:[40,40,-2,0]}[this.at('icon')];
    return `<style>
    :host{display:flex;flex-direction:column;align-items:center;height:202px;color:#41454a;font-size:14.300px;line-height:22px}
    .i{height:40px;display:flex}
    .h{color:#708090;font-weight:600;font-size:18.400px;line-height:22px;margin-bottom:8px}
    </style><div class="i">${ic(this.at('icon'),s[0],s[1],`style="margin:${s[2]}px 0 0 ${s[3]}px"`)}</div>
    <fit-text class="h" w="${this.at('w')}">${this.at('heading')}</fit-text><slot></slot>`}
});
customElements.define('page-footer', class extends Base {
  view(){return `<style>
    :host{display:grid;grid-template-columns:repeat(3,1fr);flex:1;background:#38383e;color:#cbccce;font-size:16.400px;line-height:25px}
    .c{display:flex;flex-direction:column;align-items:center;padding:9px 15px 0}
    .h{font-weight:600;font-size:20.400px;line-height:24px;color:#fff;margin-bottom:18px}
    .l{align-self:flex-start;display:flex;flex-direction:column}
    .s{display:flex;align-self:stretch;gap:51px;align-items:flex-end;height:24px;margin:27px 0 0 35px}
    .f{display:flex;align-self:stretch;margin:34px 0 0;height:37px;box-sizing:border-box;font-size:14.400px;line-height:35px}
    .n{box-sizing:border-box;width:510px;padding-left:12px;background:#fff;border:1px solid #ced4da;border-right:0;border-radius:4px 0 0 4px;color:#858c93}
    .b{box-sizing:border-box;flex:1;border:1px solid #6c757d;border-radius:0 4px 4px 0;color:#666e76;padding-left:12px}
    </style>
    <div class="c"><fit-text class="h" w="74.5">Contact</fit-text><fit-text w="274">MLV Textile and Engineering College,</fit-text><fit-text w="268">Pur Road, Bhilwara-Rajasthan (India).</fit-text><fit-text w="86">PIN : 311001</fit-text><fit-text w="249">EMail_id : mlvti_jp1@sancharnet.in</fit-text></div>
    <div class="c"><fit-text class="h" w="80">Connect</fit-text>
      <div class="s">${ic('fb',25,24)}${ic('tw',25,24)}${ic('gp',25,24)}${ic('yt',25,24)}${ic('gh',27,22)}</div>
      <div class="f"><div class="n"><fit-text w="69">Username</fit-text></div><div class="b"><fit-text w="47">Signup</fit-text></div></div></div>
    <div class="c"><fit-text class="h" w="110">Our Mission</fit-text>
      <div class="l"><fit-text w="577.5">To bring a revolution in digital education system, provide a platform where one</fit-text><fit-text w="561.5">can learn &amp; make existance of such kind of a platform where each and every</fit-text><fit-text w="483">student, teacher, professor and recruiter could get benefited by it.</fit-text></div></div>`}
});
customElements.define('landing-page', class extends Base {
  view(){return `<style>
    :host{display:flex;flex-direction:column;background:#f5f8fb;font-family:Lato,"Open Sans",sans-serif;font-variant-numeric:oldstyle-nums;min-width:0}
    .top{display:flex;flex-direction:column;align-items:center;height:308px;box-sizing:border-box;padding-top:101px;font-size:14.300px;line-height:22px;color:#41454a}
    .h{font-size:31px;line-height:36px;font-weight:300;color:#1c2126;margin-bottom:23px}
    .g{display:grid;grid-template-columns:repeat(3,1fr);height:402px;align-content:start}
    </style>
    <div class="top"><fit-text class="h" w="614">A Big Revolution In Online Education System</fit-text>
    <fit-text w="1170">To bring a revolution in digital education system, provide a platform where one can learn, practise, find out where he stands on that subject and a open forum for valuable discussions</fit-text>
    <fit-text w="1175">and it is end to end connection between students and experts and make existance of such kind of a platform where each and every student, teacher, professor and recruiter could get</fit-text>
    <fit-text w="96">benefited by it.</fit-text></div>
    <div class="g"><slot></slot></div>
    <page-footer></page-footer>`}
});

/* A single line of text spread by letter-spacing to an exact width. */
customElements.define('fit-text', class extends Base {
  view(){return `<style>:host{display:block;white-space:nowrap;width:${this.at('w')}px;font-variant-ligatures:none}span{display:inline-block}</style><span><slot></slot></span>`}
  connectedCallback(){
    super.connectedCallback();
    const s=this.shadowRoot.querySelector('span');
    const n=this.textContent.trim().length;
    s.style.letterSpacing='0.001px';
    const w=s.getBoundingClientRect().width;
    s.style.letterSpacing=((+this.at('w')-w)/(n-1)).toFixed(4)+'px';
  }
});
</script>
</body>
</html>
